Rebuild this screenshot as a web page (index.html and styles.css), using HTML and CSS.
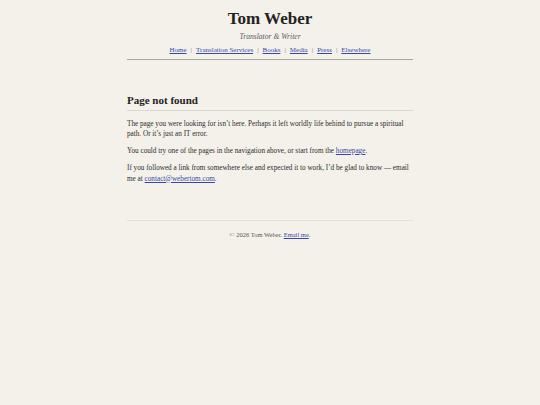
FILE: index.html
```html
<!DOCTYPE html>
<html lang="en">
<head>
<meta charset="utf-8">
<title>Page not found – Tom Weber</title>
<link rel="stylesheet" href="styles.css">
</head>
<body>
<div class="page">
  <header class="site-header">
    <h1 class="site-title">Tom Weber</h1>
    <p class="tagline">Translator &amp; Writer</p>
    <nav class="nav">
      <a href="#">Home</a><span class="sep">|</span><a href="#">Translation Services</a><span class="sep">|</span><a href="#">Books</a><span class="sep">|</span><a href="#">Media</a><span class="sep">|</span><a href="#">Press</a><span class="sep">|</span><a href="#">Elsewhere</a>
    </nav>
  </header>
  <main class="content">
    <h2 class="heading">Page not found</h2>
    <p>The page you were looking for isn’t here. Perhaps it left worldly life behind to pursue a spiritual path. Or it’s just an IT error.</p>
    <p>You could try one of the pages in the navigation above, or start from the <a href="#">homepage</a>.</p>
    <p><span>If you followed a link from somewhere else and expected it to work, I’d be glad to know — email</span> <span>me at</span> <a href="#">contact@webertom.com</a>.</p>
  </main>
  <footer class="site-footer">
    <p>© 2026 Tom Weber. <a href="#">Email me</a>.</p>
  </footer>
</div>
</body>
</html>
```
FILE: styles.css
```css
html, body {
  margin: 0;
  padding: 0;
  background: #f4f1ea;
}
body {
  font-family: "Liberation Serif", "DejaVu Serif", serif;
  color: #2a2a2a;
  font-size: 7.2px;
  line-height: 1.4;
}
a {
  color: #3848a8;
  text-decoration: underline;
}
.page {
  width: 286px;
  margin: 0 auto;
}
.site-header {
  text-align: center;
  padding-top: 9px;
  padding-bottom: 4px;
  border-bottom: 1.5px solid #a9a6a0;
}
.site-title {
  margin: 0;
  font-size: 17px;
  line-height: 20px;
  font-weight: bold;
  color: #222;
}
.tagline {
  margin: 3px 0 0;
  font-style: italic;
  color: #5a5a5a;
  font-size: 7.6px;
  line-height: 9px;
}
.nav {
  margin-top: 5px;
  font-size: 7px;
  line-height: 9px;
}
.sep {
  color: #777;
  margin: 0 4px;
}
.content {
  padding-top: 33px;
  padding-bottom: 29px;
  border-bottom: 1px solid #e4e1da;
}
.heading {
  margin: 0 0 7.5px;
  font-size: 11px;
  line-height: 14px;
  padding-bottom: 3px;
  border-bottom: 1px solid #dcd9d2;
  color: #222;
}
.content p {
  margin: 0 0 6.5px;
  line-height: 10.5px;
}
.site-footer {
  text-align: center;
  padding-top: 9px;
  font-size: 6.5px;
  line-height: 9px;
  color: #555;
}
.site-footer p {
  margin: 0;
}
```
